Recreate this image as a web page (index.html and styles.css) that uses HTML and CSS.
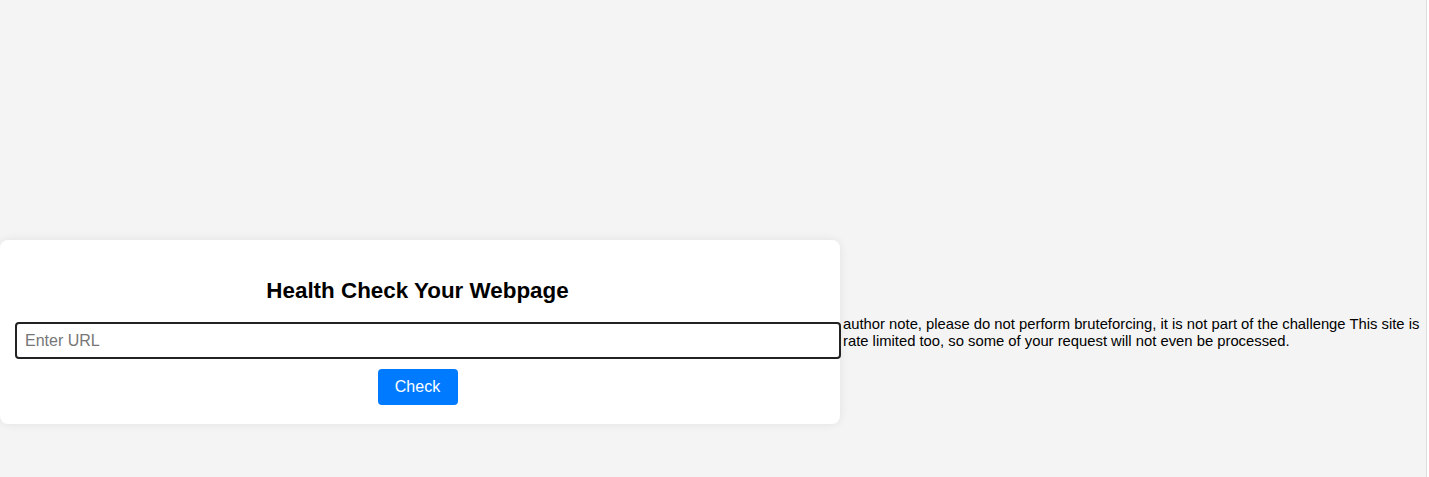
FILE: index.html
```html
<!DOCTYPE html>
<html lang="en">
<head>
<meta charset="utf-8">
<title>Health Check</title>
<link rel="stylesheet" href="styles.css">
</head>
<body>
<div class="page">
  <div class="card">
    <h2 class="title">Health Check Your Webpage</h2>
    <input class="url" type="text" placeholder="Enter URL" autofocus>
    <button class="btn" type="button">Check</button>
  </div>
  <p class="note">author note, please do not perform bruteforcing, it is not part of the challenge This site is rate limited too, so some of your request will not even be processed.</p>
</div>
</body>
</html>
```
FILE: styles.css
```css
html, body {
  margin: 0;
  padding: 0;
  background: #fff;
  font-family: "Liberation Sans", Arial, sans-serif;
}
.page {
  width: 1427px;
  height: 477px;
  box-sizing: border-box;
  background: #f4f4f4;
  border-right: 1px solid #dedede;
  display: flex;
  align-items: center;
  padding-top: 187px;
}
.card {
  width: 840px;
  box-sizing: border-box;
  background: #fff;
  border-radius: 8px;
  box-shadow: 0 0 10px rgba(0,0,0,0.08);
  padding: 38px 20px 19px 15px;
  display: flex;
  flex-direction: column;
  align-items: center;
  flex-shrink: 0;
}
.title {
  margin: 0 0 18px;
  font-size: 22.4px;
  font-weight: bold;
  color: #000;
  line-height: 1.15;
}
.url {
  width: 826px;
  height: 37px;
  box-sizing: border-box;
  margin: 0 -21px 0 0;
  align-self: flex-start;
  border: 2px solid #222;
  border-radius: 4px;
  padding: 2px 8px 0;
  font-size: 16px;
  font-family: "Liberation Sans", Arial, sans-serif;
  color: #000;
  background: #fff;
  outline: none;
  caret-color: #333;
}
.url::placeholder { color: #767676; }
.btn {
  margin-top: 10px;
  width: 80px;
  height: 36px;
  border: none;
  border-radius: 4px;
  background: #007bff;
  color: #fff;
  font-size: 16px;
  font-family: "Liberation Sans", Arial, sans-serif;
}
.note {
  margin: 0;
  width: 586px;
  flex-shrink: 0;
  padding: 2px 0 0 3px;
  box-sizing: border-box;
  font-size: 14.8px;
  line-height: 17px;
  color: #000;
}
```
